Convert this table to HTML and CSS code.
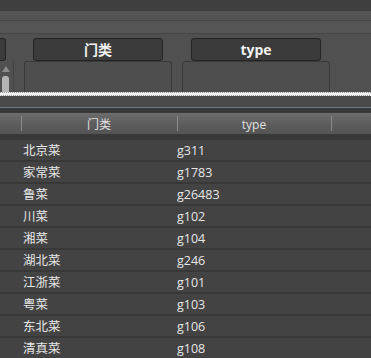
FILE: index.html
```
<!DOCTYPE html>
<html>
<head>
  <meta charset="utf-8">
  <title>菜系</title>
  <link rel="stylesheet" href="styles.css">
</head>
<body>
  <div class="titlebar"></div>
  <div class="toolbar"></div>
  <div class="toolbar lower"></div>
  <div class="fields">
    <div class="field first">
      <div class="btn cut"></div>
      <div class="scroll">
        <span class="arrow"></span>
        <span class="thumb"></span>
      </div>
    </div>
    <div class="field">
      <div class="btn">门类</div>
      <div class="box"></div>
    </div>
    <div class="field">
      <div class="btn">type</div>
      <div class="box"></div>
    </div>
  </div>
  <div class="splitter"></div>
  <div class="band"></div>
  <div class="grid">
    <div class="row head">
      <div class="cell c0"></div>
      <div class="cell c1">门类</div>
      <div class="cell c2">type</div>
      <div class="cell c3"></div>
    </div>
    <div class="rows">
      <div class="row"><div class="cell c0"></div><div class="cell c1">北京菜</div><div class="cell c2">g311</div></div>
      <div class="row"><div class="cell c0"></div><div class="cell c1">家常菜</div><div class="cell c2">g1783</div></div>
      <div class="row"><div class="cell c0"></div><div class="cell c1">鲁菜</div><div class="cell c2">g26483</div></div>
      <div class="row"><div class="cell c0"></div><div class="cell c1">川菜</div><div class="cell c2">g102</div></div>
      <div class="row"><div class="cell c0"></div><div class="cell c1">湘菜</div><div class="cell c2">g104</div></div>
      <div class="row"><div class="cell c0"></div><div class="cell c1">湖北菜</div><div class="cell c2">g246</div></div>
      <div class="row"><div class="cell c0"></div><div class="cell c1">江浙菜</div><div class="cell c2">g101</div></div>
      <div class="row"><div class="cell c0"></div><div class="cell c1">粤菜</div><div class="cell c2">g103</div></div>
      <div class="row"><div class="cell c0"></div><div class="cell c1">东北菜</div><div class="cell c2">g106</div></div>
      <div class="row"><div class="cell c0"></div><div class="cell c1">清真菜</div><div class="cell c2">g108</div></div>
    </div>
  </div>
</body>
</html>
```
FILE: styles.css
```
html,
body {
  margin: 0;
  padding: 0;
  height: 100vh;
  overflow: hidden;
}
body {
  background-color: #424242;
  font-family: "Open Sans", "Noto Sans CJK SC", sans-serif;
  color: #e6e6e6;
}

.titlebar {
  height: 11px;
  background-color: #3f3f3f;
}
.toolbar {
  height: 9px;
  background-color: #545454;
  border-bottom: 1px solid #484848;
}
.toolbar.lower {
  height: 12px;
  background-color: #555;
  border-bottom: 1px solid #454545;
}

/* filter fields above the table */
.fields {
  display: flex;
  height: 58px;
  padding-top: 4px;
  box-sizing: border-box;
  background-color: #505050;
}
.field {
  display: flex;
  flex-direction: column;
  align-items: center;
  width: 148px;
  margin-left: 9px;
}
.field + .field {
  margin-left: 10px;
}
.field.first {
  width: 14px;
  margin-left: 0;
  align-items: flex-start;
}
.btn {
  box-sizing: border-box;
  width: 130px;
  height: 23px;
  background-color: #3b3b3b;
  border: 1px solid #242424;
  border-radius: 3px;
  color: #f2f2f2;
  font-size: 14px;
  font-weight: bold;
  line-height: 21px;
  text-align: center;
}
.btn.cut {
  width: 6px;
  border-left: 0;
  border-radius: 0 3px 3px 0;
}
.box {
  flex: 1;
  width: 100%;
  box-sizing: border-box;
  background-color: #4e4e4e;
  border: 1px solid #3a3a3a;
  border-bottom: 0;
  border-radius: 3px 3px 0 0;
}
.scroll {
  flex: 1;
  width: 14px;
  box-sizing: border-box;
  border-right: 1px solid #444;
  display: flex;
  flex-direction: column;
  align-items: flex-start;
  padding: 5px 0 0 2px;
}
.scroll .arrow {
  width: 0;
  height: 0;
  border-left: 4px solid transparent;
  border-right: 4px solid transparent;
  border-bottom: 6px solid #8a8a8a;
}
.scroll .thumb {
  flex: 1;
  width: 7px;
  margin-top: 4px;
  background-color: #b4b4b4;
  border-radius: 3px 3px 0 0;
}

.splitter {
  height: 4px;
  background-color: #f0f0f0;
  background-image:
    repeating-linear-gradient(90deg, #9a9a9a 0 1px, transparent 1px 2px),
    repeating-linear-gradient(90deg, transparent 0 1px, #9a9a9a 1px 2px);
  background-size: 100% 1px, 100% 1px;
  background-position: 0 0, 0 100%;
  background-repeat: no-repeat;
}
.band {
  height: 11px;
  background-color: #4a4a4a;
  border-bottom: 1px solid #6b7985;
}

/* table */
.grid {
  border-top: 5px solid #393939;
}
.row {
  display: flex;
  height: 20px;
  border-bottom: 2px solid #383838;
  font-size: 12.5px;
  line-height: 22px;
}
.row.head {
  height: 21px;
  border-bottom: 6px solid #383838;
  background-image: linear-gradient(#6c6c6c, #5c5c5c 55%, #545454);
  color: #e0e0e0;
  font-size: 12px;
  line-height: 23px;
  text-align: center;
}
.cell {
  box-sizing: border-box;
  white-space: nowrap;
  overflow: hidden;
}
.c0 {
  width: 21px;
}
.c1 {
  width: 156px;
  padding-left: 2px;
}
.c2 {
  width: 154px;
}
.c3 {
  flex: 1;
}
.head .cell {
  padding: 0;
}
.head .c1,
.head .c2,
.head .c3 {
  background-image: linear-gradient(#8a8a8a, #8a8a8a);
  background-size: 1px 15px;
  background-position: 0 3px;
  background-repeat: no-repeat;
}
.rows .row {
  background-color: #434343;
}
```
